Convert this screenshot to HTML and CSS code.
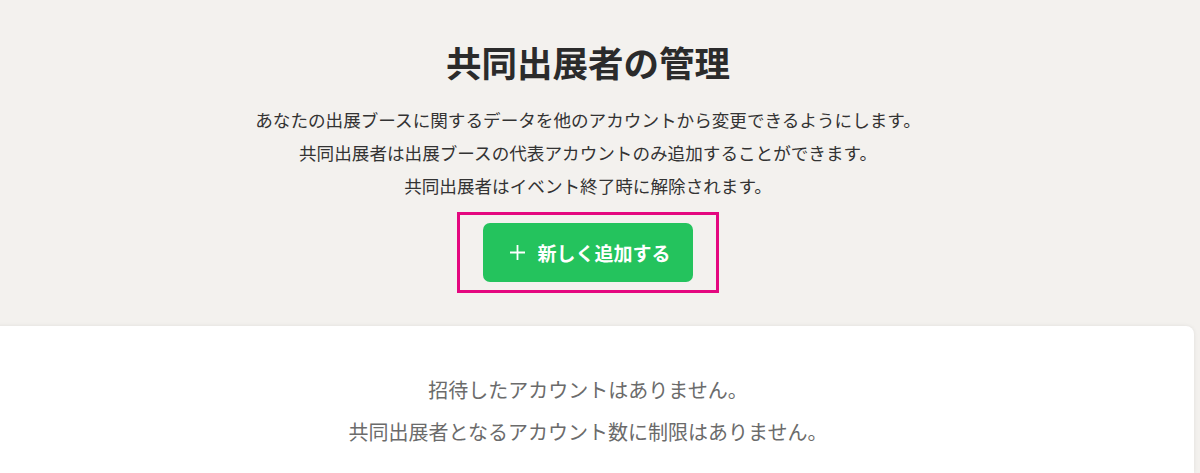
FILE: index.html
```html
<!DOCTYPE html>
<html lang="ja">
<head>
    <meta charset="UTF-8">
    <meta name="viewport" content="width=device-width, initial-scale=1.0">
    <title>共同出展者の管理</title>
    <link rel="stylesheet" href="styles.css">
</head>
<body>
    <div class="page">
        <section class="head">
            <h1 class="title">共同出展者の管理</h1>
            <p class="desc">あなたの出展ブースに関するデータを他のアカウントから変更できるようにします。</p>
            <p class="desc">共同出展者は出展ブースの代表アカウントのみ追加することができます。</p>
            <p class="desc">共同出展者はイベント終了時に解除されます。</p>
            <div class="highlight">
                <button class="add-button">
                    <svg class="plus" width="17" height="17" viewBox="0 0 17 17">
                        <path d="M8.5 1v15M1 8.5h15" stroke="#fff" stroke-width="1.8" fill="none"/>
                    </svg>
                    新しく追加する
                </button>
            </div>
        </section>
        <section class="card">
            <p class="empty">招待したアカウントはありません。</p>
            <p class="empty">共同出展者となるアカウント数に制限はありません。</p>
        </section>
    </div>
</body>
</html>
```

FILE: styles.css
```css
body {
    margin: 0;
    background-color: #f3f1ee;
    font-family: "Noto Sans CJK JP", "Noto Sans", sans-serif;
    color: #333333;
    height: 473px;
    overflow: hidden;
}
.page {
    margin: 0 6px 0 -18px;
}
.head {
    display: flex;
    flex-direction: column;
    align-items: center;
    padding-top: 38px;
}
.title {
    margin: 0 0 17px;
    font-size: 35.5px;
    line-height: 48px;
    font-weight: 700;
    color: #2b2b2b;
}
.desc {
    margin: 0;
    font-size: 17.6px;
    line-height: 33px;
}
.highlight {
    margin-top: 10px;
    border: 3px solid #e4087f;
    padding: 8px 23px;
}
.add-button {
    display: flex;
    align-items: center;
    justify-content: center;
    gap: 11px;
    width: 210px;
    height: 59px;
    padding: 0 0 0 4px;
    background-color: #24c35d;
    color: #ffffff;
    border: none;
    border-radius: 7px;
    font-family: inherit;
    font-size: 19px;
    font-weight: 700;
    cursor: pointer;
}
.card {
    margin-top: 33px;
    background-color: #ffffff;
    border-radius: 0 8px 0 0;
    box-shadow: 0 0 4px rgba(0,0,0,0.08);
    padding: 43px 0 20px;
    text-align: center;
}
.empty {
    margin: 0;
    font-size: 20px;
    line-height: 42px;
    color: #6b6b6b;
}
```
